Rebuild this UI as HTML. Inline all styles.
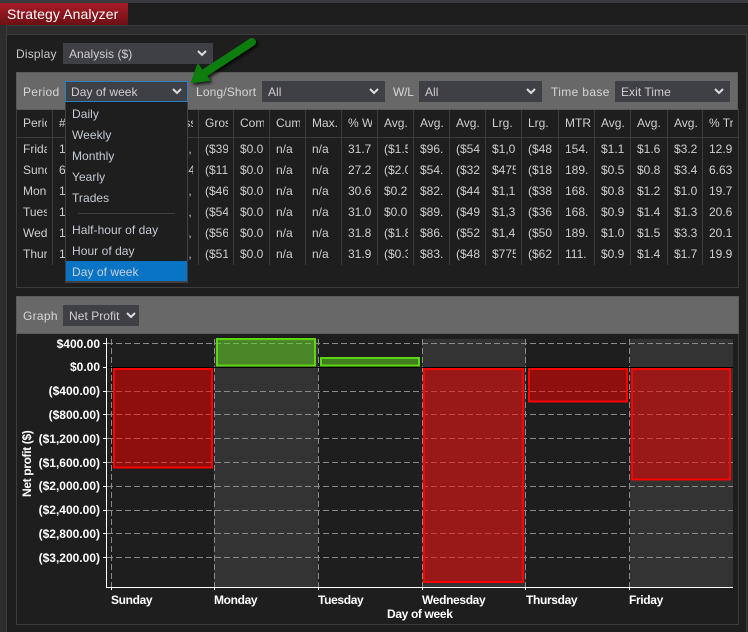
<!DOCTYPE html>
<html><head><meta charset="utf-8"><style>
*{box-sizing:border-box}
html,body{margin:0;padding:0;width:748px;height:632px;overflow:hidden;background:#1e1e1e;font:12px "Liberation Sans",Arial,sans-serif;color:#d0d0d0}
.a{position:absolute}
.lbl{position:absolute;letter-spacing:.3px;color:#c8c8c8;line-height:14px;white-space:nowrap}
.sel{position:absolute;background:#3f3f46;height:21px;line-height:23px;padding-left:6px;color:#d0d0d0;letter-spacing:.05px;white-space:nowrap}
.sel svg{position:absolute;top:7px;right:6px}
table{position:absolute;left:17px;top:110px;width:721px;border-collapse:separate;border-spacing:0;table-layout:fixed}
td{height:21px;padding:0 0 0 6px;border-left:1px solid #3d3d3f;border-right:5px solid #1e1e1e;overflow:hidden;white-space:nowrap;line-height:21px;color:#cfcfcf}
td:first-child{border-left:0;padding-left:6px}
td.p{padding-left:8px}
td.w{border-right-width:2px}
tr.h td{height:29px;line-height:27px;padding-bottom:2px;color:#d0d0d0}
.it{position:absolute;left:6px;color:#c4cbd4;letter-spacing:.05px;line-height:14px}
</style></head><body>
<div class="a" style="left:0;top:0;width:748px;height:3px;background:#3a3a3e"></div>
<div class="a" style="left:0;top:3px;width:128px;height:22px;background:linear-gradient(#a81c26,#6c1016);color:#fff;font-size:14px;line-height:22px;padding-left:7px;letter-spacing:.1px">Strategy Analyzer</div>
<div class="a" style="left:0;top:25px;width:748px;height:9px;background:#2d2d30;border-top:1px solid #3c3c3e"></div>
<div class="a" style="left:0;top:25px;width:7px;height:607px;background:#2d2d30;border-right:1px solid #3c3c3e"></div>
<div class="a" style="left:7px;top:34px;width:740px;height:1px;background:#3c3c3e"></div>
<div class="a" style="left:746px;top:34px;width:2px;height:598px;background:#2d2d30;border-left:1px solid #3c3c3e"></div>

<div class="lbl" style="left:16px;top:47px;letter-spacing:.2px">Display</div>
<div class="sel" style="left:63px;top:43px;width:150px">Analysis ($)<svg width="10" height="7"><path d="M1 1l4 4 4-4" fill="none" stroke="#ddd" stroke-width="2"/></svg></div>

<div class="a" style="left:16px;top:72px;width:722px;height:38px;background:#686868;border:1px solid #5a5a5a"></div>
<div class="lbl" style="left:23px;top:85px;color:#d6d6d6">Period</div>
<div class="sel" style="left:65px;top:81px;width:123px;border:1px solid #2a7fc0;padding-left:5px;line-height:21px">Day of week<svg style="top:6px;right:5px" width="10" height="7"><path d="M1 1l4 4 4-4" fill="none" stroke="#ddd" stroke-width="2"/></svg></div>
<div class="lbl" style="left:196px;top:85px;color:#d6d6d6;letter-spacing:.15px">Long/Short</div>
<div class="sel" style="left:262px;top:81px;width:123px">All<svg width="10" height="7"><path d="M1 1l4 4 4-4" fill="none" stroke="#ddd" stroke-width="2"/></svg></div>
<div class="lbl" style="left:393px;top:85px;color:#d6d6d6;letter-spacing:-.2px">W/L</div>
<div class="sel" style="left:419px;top:81px;width:123px">All<svg width="10" height="7"><path d="M1 1l4 4 4-4" fill="none" stroke="#ddd" stroke-width="2"/></svg></div>
<div class="lbl" style="left:551px;top:85px;color:#d6d6d6;letter-spacing:.35px">Time base</div>
<div class="sel" style="left:615px;top:81px;width:115px">Exit Time<svg width="10" height="7"><path d="M1 1l4 4 4-4" fill="none" stroke="#ddd" stroke-width="2"/></svg></div>

<div class="a" style="left:16px;top:109px;width:723px;height:179px;border:1px solid #3d3d3f;border-top:0"></div>
<table>
<colgroup><col style="width:35px"><col style="width:37px"><col style="width:36px"><col style="width:37px"><col style="width:36px"><col style="width:35px"><col style="width:36px"><col style="width:36px"><col style="width:36px"><col style="width:36px"><col style="width:36px"><col style="width:36px"><col style="width:36px"><col style="width:36px"><col style="width:37px"><col style="width:36px"><col style="width:36px"><col style="width:37px"><col style="width:35px"><col style="width:36px"></colgroup>
<tr class="h"><td>Period</td><td># Trades</td><td>Wins</td><td>Net</td><td class="p">Loss</td><td>Gross</td><td>Comm</td><td>Cum</td><td class="w">Max.</td><td>% Win</td><td>Avg.</td><td>Avg.</td><td>Avg.</td><td>Lrg.</td><td>Lrg. L</td><td class="w">MTR</td><td>Avg.</td><td>Avg.</td><td class="w">Avg.</td><td>% Tr</td></tr>
<tr><td>Friday</td><td>1</td><td></td><td></td><td class="p">($1,</td><td>($39</td><td>$0.0</td><td>n/a</td><td>n/a</td><td>31.7</td><td>($1.5</td><td>$96.</td><td>($54</td><td>$1,0</td><td>($48</td><td>154.</td><td>$1.1</td><td>$1.6</td><td>$3.2</td><td>12.9</td></tr>
<tr><td>Sunday</td><td>6</td><td></td><td></td><td class="p">($84</td><td>($11</td><td>$0.0</td><td>n/a</td><td>n/a</td><td>27.2</td><td>($2.0</td><td>$54.</td><td>($32</td><td>$475</td><td>($18</td><td>189.</td><td>$0.5</td><td>$0.8</td><td>$3.4</td><td>6.63</td></tr>
<tr><td>Monday</td><td>1</td><td></td><td></td><td class="p">($1,</td><td>($46</td><td>$0.0</td><td>n/a</td><td>n/a</td><td>30.6</td><td>$0.2</td><td>$82.</td><td>($44</td><td>$1,1</td><td>($38</td><td>168.</td><td>$0.8</td><td>$1.2</td><td>$1.0</td><td>19.7</td></tr>
<tr><td>Tuesday</td><td>1</td><td></td><td></td><td class="p">($1,</td><td>($54</td><td>$0.0</td><td>n/a</td><td>n/a</td><td>31.0</td><td>$0.0</td><td>$89.</td><td>($49</td><td>$1,3</td><td>($36</td><td>168.</td><td>$0.9</td><td>$1.4</td><td>$1.3</td><td>20.6</td></tr>
<tr><td>Wednes</td><td>1</td><td></td><td></td><td class="p">($1,</td><td>($56</td><td>$0.0</td><td>n/a</td><td>n/a</td><td>31.8</td><td>($1.8</td><td>$86.</td><td>($52</td><td>$1,4</td><td>($50</td><td>189.</td><td>$1.0</td><td>$1.5</td><td>$3.3</td><td>20.1</td></tr>
<tr><td>Thursday</td><td>1</td><td></td><td></td><td class="p">($1,</td><td>($51</td><td>$0.0</td><td>n/a</td><td>n/a</td><td>31.9</td><td>($0.3</td><td>$83.</td><td>($48</td><td>$775</td><td>($62</td><td>111.</td><td>$0.9</td><td>$1.4</td><td>$1.7</td><td>19.9</td></tr>
</table>
<div class="a" style="left:17px;top:137px;width:721px;height:1px;background:#3d3d3f"></div>

<div class="a" style="left:65px;top:102px;width:123px;height:181px;background:#1e1e1e;border:1px solid #3f3f46;border-bottom-width:2px;border-top:0">
<div class="it" style="top:5px">Daily</div>
<div class="it" style="top:26px">Weekly</div>
<div class="it" style="top:47px">Monthly</div>
<div class="it" style="top:68px">Yearly</div>
<div class="it" style="top:89px">Trades</div>
<div class="a" style="left:12px;top:111px;width:97px;height:1px;background:#3f3f46"></div>
<div class="it" style="top:121px">Half-hour of day</div>
<div class="it" style="top:142px">Hour of day</div>
<div class="a" style="left:0;top:159px;width:121px;height:20px;background:#0a74c4"></div>
<div class="it" style="top:163px;color:#c8d2dc">Day of week</div>
</div>

<div class="a" style="left:16px;top:296px;width:723px;height:329px;border:1px solid #3d3d3f"></div>
<div class="a" style="left:16px;top:296px;width:723px;height:38px;background:#686868;border:1px solid #5a5a5a"></div>
<div class="lbl" style="left:23px;top:309px;color:#d6d6d6">Graph</div>
<div class="sel" style="left:63px;top:305px;width:76px">Net Profit<svg style="right:3px" width="10" height="7"><path d="M1 1l4 4 4-4" fill="none" stroke="#ddd" stroke-width="2"/></svg></div>

<svg class="a" style="left:0;top:0" width="748" height="632" font-family="Liberation Sans, Arial, sans-serif" font-size="12" font-weight="bold" fill="#fff">
<defs><filter id="sh" x="-20%" y="-20%" width="140%" height="140%"><feDropShadow dx="2" dy="2" stdDeviation="1.5" flood-color="#000" flood-opacity=".8"/></filter></defs>
<rect x="214" y="339" width="104" height="248" fill="#333"/>
<rect x="422" y="339" width="104" height="248" fill="#333"/>
<rect x="630" y="339" width="103" height="248" fill="#333"/>
<g stroke="#8a8a8a" stroke-width="1" stroke-dasharray="6,3" fill="none">
<path d="M107 343.5H733M107 391.5H733M107 414.5H733M107 438.5H733M107 462.5H733M107 486.5H733M107 510.5H733M107 533.5H733M107 557.5H733"/>
<path d="M111.5 339V587M214.5 339V587M318.5 339V587M422.5 339V587M525.5 339V587M629.5 339V587"/>
</g>
<path d="M107 367.5H733" stroke="#000" stroke-width="1"/>
<g fill="rgba(255,0,0,.5)" stroke="#f00" stroke-width="2">
<rect x="114" y="369" width="98" height="98.500"/>
<rect x="424" y="369" width="99" height="213"/>
<rect x="529" y="369" width="98" height="32.500"/>
<rect x="632" y="369" width="98" height="110.500"/>
</g>
<g fill="rgba(98,220,30,.5)" stroke="#5cd612" stroke-width="2">
<rect x="217" y="339" width="98" height="26.500"/>
<rect x="321" y="358" width="98" height="7.500"/>
</g>
<path d="M106.500 338V587.500H733" fill="none" stroke="#fff" stroke-width="1"/>
<path d="M103 343.500h4M103 367.500h4M103 391.500h4M103 414.500h4M103 438.500h4M103 462.500h4M103 486.500h4M103 510.500h4M103 533.500h4M103 557.500h4M111.500 587v3M214.500 587v3M318.500 587v3M422.500 587v3M525.500 587v3M629.500 587v3" stroke="#fff" stroke-width="1"/>
<g text-anchor="end">
<text x="100" y="348">$400.00</text><text x="100" y="371">$0.00</text><text x="100" y="395">($400.00)</text><text x="100" y="419">($800.00)</text><text x="100" y="443">($1,200.00)</text><text x="100" y="467">($1,600.00)</text><text x="100" y="490">($2,000.00)</text><text x="100" y="514">($2,400.00)</text><text x="100" y="538">($2,800.00)</text><text x="100" y="562">($3,200.00)</text>
</g>
<g letter-spacing="-.35">
<text x="111" y="604">Sunday</text><text x="214" y="604">Monday</text><text x="318" y="604">Tuesday</text><text x="422" y="604">Wednesday</text><text x="526" y="604">Thursday</text><text x="629" y="604">Friday</text>
<text x="387" y="618">Day of week</text>
<text transform="translate(31 497) rotate(-90)">Net profit ($)</text>
</g>
<g filter="url(#sh)">
<path d="M252 42L206 72" stroke="#0a7d0a" stroke-width="8" stroke-linecap="round" fill="none"/>
<path d="M192 82L198 65L209 80Z" fill="#0a7d0a" stroke="#0a7d0a" stroke-width="2" stroke-linejoin="round"/>
</g>
</svg>
</body></html>
